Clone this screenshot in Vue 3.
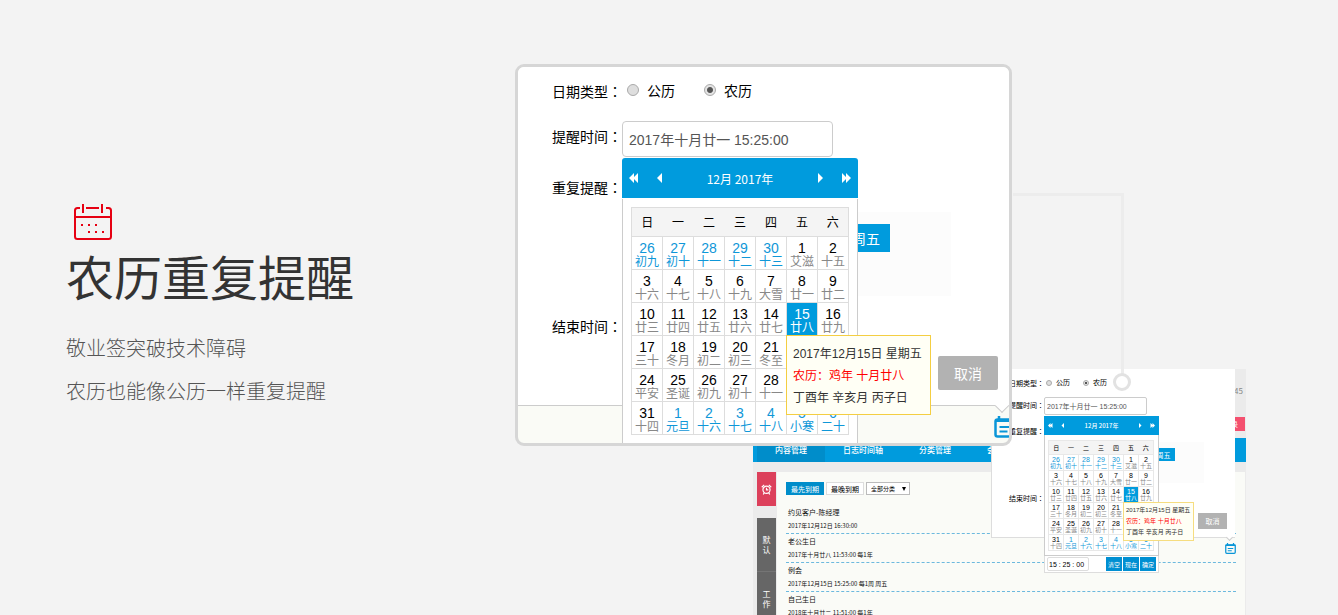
<script setup>
import { ref } from 'vue'

const weekdays = ['日', '一', '二', '三', '四', '五', '六']

const source = [
  '26 初九,27 初十,28 十一,29 十二,30 十三,1 艾滋,2 十五',
  '3 十六,4 十七,5 十八,6 十九,7 大雪,8 廿一,9 廿二',
  '10 廿三,11 廿四,12 廿五,13 廿六,14 廿七,15 廿八,16 廿九',
  '17 三十,18 冬月,19 初二,20 初三,21 冬至,22 初五,23 初六',
  '24 平安,25 圣诞,26 初九,27 初十,28 十一,29 十二,30 十三',
  '31 十四,1 元旦,2 十六,3 十七,4 十八,5 小寒,6 二十'
]

const weeks = source.map((row, w) =>
  row.split(',').map((cell) => {
    const [day, lunar] = cell.split(' ')
    const other = (w === 0 && +day > 20) || (w === 5 && +day < 20)
    return { day, lunar, other, active: w === 2 && day === '15' }
  })
)

const windows = ['large', 'small']
const kind = ref({ large: 'lunar', small: 'lunar' })
const when = ref('2017年十月廿一 15:25:00')
const time = ref('15 : 25 : 00')
const category = ref('全部分类')

const notes = [
  { title: '约见客户-陈经理', due: '2017年12月12日 16:30:00' },
  { title: '老公生日', due: '2017年十月廿八 11:53:00 每1年' },
  { title: '例会', due: '2017年12月15日 15:25:00 每1周 周五' },
  { title: '自己生日', due: '2018年十月廿二 11:51:00 每1年' }
]
</script>

<template>
  <main class="hero">
    <section class="copy">
      <svg class="mark" viewBox="0 0 38 38" fill="none" stroke="#e60012" stroke-width="2">
        <path d="M6 4H3.500Q1 4 1 6.500V32.500Q1 35 3.500 35H34.500Q37 35 37 32.500V6.500Q37 4 34.500 4H32M12 4H25M1 13H37" />
        <path d="M9 0V9M28 0V9" />
        <path d="M7 21h2M14 21h2M21 21h2M14 28h2M21 28h2M28 28h2" />
      </svg>
      <h1>农历重复提醒</h1>
      <p>敬业签突破技术障碍</p>
      <p>农历也能像公历一样重复提醒</p>
    </section>

    <section class="stage">
      <div class="site">
        <header class="site-head">
          <span>45</span>
          <button type="button">登录</button>
        </header>
        <nav class="site-nav">
          <a href="#" class="on">内容管理</a>
          <a href="#">日志时间轴</a>
          <a href="#">分类管理</a>
          <a href="#">会员</a>
        </nav>
        <div class="site-body">
          <aside>
            <button type="button" class="alarm" aria-label="提醒">
              <svg viewBox="0 0 12 12" fill="none" stroke="#fff" stroke-width="1.300">
                <circle cx="6" cy="6.300" r="3.900" />
                <path d="M6 4v2.500h2M.8 3.500 3.500 1M11.200 3.500 8.500 1M3.500 9.500 2.500 11.500M8.500 9.500 9.500 11.500" />
              </svg>
            </button>
            <div class="tabs">
              <button type="button">默认</button>
              <button type="button">工作</button>
            </div>
          </aside>
          <div class="list">
            <div class="tools">
              <button type="button" class="on">最先到期</button>
              <button type="button">最晚到期</button>
              <span class="pick">
                <select v-model="category" aria-label="分类">
                  <option>全部分类</option>
                </select>
                <svg viewBox="0 0 4 4"><path d="M0 0h4L2 4z" /></svg>
              </span>
            </div>
            <article v-for="note in notes" :key="note.title">
              <h2>{{ note.title }}</h2>
              <p>{{ note.due }}</p>
            </article>
          </div>
        </div>
      </div>

      <div v-for="size in windows" :key="size" class="window" :class="size">
        <form class="popup" @submit.prevent>
          <div class="row kinds">
            <span class="label">日期类型<i>：</i></span>
            <label><input v-model="kind[size]" type="radio" :name="size + '-kind'" value="solar" />公历</label>
            <label><input v-model="kind[size]" type="radio" :name="size + '-kind'" value="lunar" />农历</label>
          </div>
          <div class="row when">
            <label class="label" :for="size + '-when'">提醒时间<i>：</i></label>
            <div class="field">
              <input :id="size + '-when'" v-model="when" type="text" />
              <div class="calendar">
                <div class="cal-head">
                  <button type="button" aria-label="上一年"><svg viewBox="0 0 10 10"><path d="M5 0v10L0 5zM9 0v10L4 5z" /></svg></button>
                  <button type="button" aria-label="上一月"><svg viewBox="0 0 10 10"><path d="M8 0v10L3 5z" /></svg></button>
                  <strong>12月 2017年</strong>
                  <button type="button" aria-label="下一月"><svg viewBox="0 0 10 10"><path d="M2 0v10l5-5z" /></svg></button>
                  <button type="button" aria-label="下一年"><svg viewBox="0 0 10 10"><path d="M1 0v10l5-5zM5 0v10l5-5z" /></svg></button>
                </div>
                <div class="cal-body">
                  <table>
                    <thead>
                      <tr><th v-for="d in weekdays" :key="d" scope="col">{{ d }}</th></tr>
                    </thead>
                    <tbody>
                      <tr v-for="(week, w) in weeks" :key="w">
                        <td v-for="cell in week" :key="cell.day">
                          <div class="cell">
                            <button type="button" class="day" :class="{ other: cell.other, active: cell.active }">
                              <b>{{ cell.day }}</b><small>{{ cell.lunar }}</small>
                            </button>
                            <div v-if="cell.active" class="tip">
                              <p>2017年12月15日 星期五</p>
                              <p class="red">农历：鸡年 十月廿八</p>
                              <p>丁酉年 辛亥月 丙子日</p>
                            </div>
                          </div>
                        </td>
                      </tr>
                    </tbody>
                  </table>
                </div>
                <div v-if="size === 'small'" class="cal-foot">
                  <input v-model="time" type="text" aria-label="时间" />
                  <span><button type="button">清空</button><button type="button">现在</button><button type="button">确定</button></span>
                </div>
              </div>
            </div>
          </div>
          <div class="row repeat">
            <span class="label">重复提醒<i>：</i></span>
            <div class="choices"><button type="button">周五</button></div>
          </div>
          <div class="row end">
            <span class="label">结束时间<i>：</i></span>
          </div>
          <div class="actions"><button type="button">取消</button></div>
          <span class="notch"></span>
        </form>
        <svg class="agenda" viewBox="0 0 22 22" fill="none" stroke="#0a96d8">
          <rect x="1.500" y="3.500" width="19" height="17" rx="2" stroke-width="2.500" />
          <path d="M1 4.500h20" stroke-width="3" />
          <path d="M5 0v5M17 0v5" stroke-width="2.500" />
          <path d="M5.500 11h11M5.500 15.500h8" stroke-width="2" />
        </svg>
      </div>

      <div class="connector"></div>
      <div class="ring"></div>
    </section>
  </main>
</template>

<style>
body {
  margin: 0;
  background: #f3f3f3;
}
</style>

<style scoped>
* {
  box-sizing: border-box;
}

.hero {
  display: flex;
  min-height: 100vh;
  overflow: hidden;
  background: #f3f3f3;
  color: #000;
  font-family: "Liberation Sans", "Noto Sans CJK SC", sans-serif;
}

button,
input,
select {
  margin: 0;
  padding: 0;
  border: 0;
  font: inherit;
  color: inherit;
  background: none;
}

button {
  display: block;
  cursor: pointer;
}

h1,
h2,
p {
  margin: 0;
  font-weight: 400;
}

a {
  color: inherit;
  text-decoration: none;
}

svg {
  display: block;
}

/* headline column */
.copy {
  flex: none;
  width: 515px;
  padding: 204px 0 0 66px;
}

.mark {
  width: 38px;
  height: 38px;
  margin-left: 8px;
}

.copy h1 {
  margin: 5px 0 15px;
  font-size: 48px;
  line-height: 66px;
  font-weight: 400;
  color: #333;
}

.copy p {
  font-size: 20px;
  line-height: 43px;
  font-weight: 300;
  color: #555;
}

/* free canvas of overlapping windows */
.stage {
  position: relative;
  flex: 1;
  overflow: hidden;
}

.connector {
  position: absolute;
  left: 498px;
  top: 193px;
  z-index: 3;
  width: 111px;
  height: 181px;
  border: solid #ececec;
  border-width: 3px 3px 0 0;
}

.ring {
  position: absolute;
  left: 598px;
  top: 373px;
  z-index: 3;
  width: 18px;
  height: 18px;
  border: 3px solid #e2e2e2;
  border-radius: 50%;
  background: #fff;
}

/* note site */
.site {
  position: absolute;
  left: 238px;
  top: 369px;
  bottom: 0;
  width: 493px;
  overflow: hidden;
  background: #ebebeb;
  font-family: "Noto Sans CJK SC", sans-serif;
}

.site-head {
  display: flex;
  flex-direction: column;
  align-items: flex-end;
  height: 69px;
  padding-top: 16px;
}

.site-head span {
  margin: 0 3px 20px 0;
  font-size: 8px;
  line-height: 12px;
  color: #888;
}

.site-head button {
  height: 14px;
  margin-right: 1px;
  padding: 0 7px;
  background: #f4506f;
  color: #fff;
  font-size: 7px;
  line-height: 14px;
}

.site-nav {
  display: flex;
  height: 24px;
  padding-left: 4px;
  background: #009bdd;
  color: #fff;
  font-size: 8px;
  line-height: 24px;
  font-weight: 500;
}

.site-nav a {
  padding: 0 18px;
}

.site-nav .on {
  background: #008dca;
}

.site-body {
  display: flex;
  height: 100%;
  padding: 10px 1px 0 4px;
}

aside {
  width: 19px;
  margin-right: 1px;
  font-size: 8px;
  line-height: 10px;
  color: #fff;
}

.alarm {
  width: 19px;
  height: 34px;
  margin-bottom: 12px;
  padding: 0 4px;
  background: #dc405b;
}

.tabs {
  height: 200px;
  background: #666;
}

.tabs button {
  width: 19px;
  height: 54px;
  padding: 0 5px;
  border-bottom: 1px solid #757575;
}

.list {
  flex: 1;
  padding: 10px 9px;
  background: #fafbf7;
}

.tools {
  display: flex;
  gap: 2px;
  margin-bottom: 10px;
  font-size: 7px;
  line-height: 10px;
}

.tools button {
  width: 38px;
  height: 13px;
  border: 1px solid #ddd;
  background: #fff;
}

.tools .on {
  border-color: #008dca;
  background: #008dca;
  color: #fff;
}

.pick {
  position: relative;
  width: 44px;
  height: 13px;
  border: 1px solid #bbb;
  background: #fff;
}

.pick select {
  display: block;
  width: 100%;
  height: 100%;
  padding-left: 4px;
  appearance: none;
  font-size: 6px;
}

.pick svg {
  position: absolute;
  right: 3px;
  top: 4px;
  width: 4px;
  height: 4px;
}

.list article {
  height: 29px;
  padding-left: 2px;
  border-bottom: 1px dashed #6cb9de;
  color: #111;
}

.list h2 {
  font-size: 7px;
  line-height: 14px;
}

.list p {
  font-size: 6px;
  line-height: 14px;
}

/* reminder windows, shared */
.window {
  position: absolute;
}

.popup {
  position: relative;
  background: #fff;
}

.row {
  display: flex;
  align-items: flex-start;
}

.label {
  flex: none;
  font-family: "Noto Sans CJK SC", sans-serif;
}

.label i {
  font-family: "Noto Sans CJK TC", sans-serif;
  font-style: normal;
}

.kinds label {
  display: flex;
  align-items: center;
}

.kinds input {
  appearance: none;
  display: block;
  border: 1px solid #aaa;
  border-radius: 50%;
  background: #dedede;
}

.kinds input:checked {
  background: radial-gradient(circle, #555 35%, #e4e4e4 50%);
}

.field {
  position: relative;
}

.field > input {
  display: block;
  border: 1px solid #ccc;
  background: #fff;
  color: #555;
}

.calendar {
  position: absolute;
  left: 0;
  z-index: 2;
}

.cal-head {
  display: flex;
  align-items: center;
  background: #009bdd;
  color: #fff;
}

.cal-head strong {
  flex: 1;
  text-align: center;
  font-family: "Noto Sans CJK SC", sans-serif;
  font-weight: 400;
}

.cal-head svg {
  width: 100%;
  fill: #fff;
}

.cal-body {
  border: solid #ccc;
  border-width: 0 1px 1px;
  background: #fff;
}

table {
  width: 100%;
  table-layout: fixed;
  border-collapse: collapse;
}

th,
td {
  padding: 0;
  border: 1px solid #ddd;
}

th {
  border-width: 1px 0;
  background: #f4f4f4;
  font-weight: 400;
}

th:first-child {
  border-left-width: 1px;
}

th:last-child {
  border-right-width: 1px;
}

.cell {
  position: relative;
}

.day {
  display: flex;
  flex-direction: column;
  align-items: center;
  width: 100%;
}

.day b {
  font-weight: 400;
}

.day small {
  color: #888;
}

.day.other,
.day.other small {
  color: #0f97d8;
}

.day.active,
.day.active small {
  background: #009bdd;
  color: #fff;
}

.tip {
  position: absolute;
  left: -1px;
  top: 100%;
  z-index: 3;
  border: 1px solid #f4ce42;
  background: #fffff5;
  color: #333;
  white-space: nowrap;
}

.tip .red {
  color: #f00;
}

.choices {
  background: #fcfcfc;
}

.choices button {
  background: #009bdd;
  color: #fff;
}

.actions {
  display: flex;
  justify-content: flex-end;
}

.actions button {
  background: #b2b2b2;
  color: #fff;
}

.notch {
  position: absolute;
  border: solid #ccc;
  border-width: 0 1px 1px 0;
  background: #fff;
  transform: rotate(45deg);
}

.agenda {
  position: absolute;
}

/* large window */
.large {
  left: 0;
  top: 64px;
  z-index: 2;
  width: 497px;
  height: 382px;
  overflow: hidden;
  border: 3px solid #d6d6d6;
  border-radius: 9px;
  background: #fafbf6;
  font-size: 14px;
}

.large .popup {
  padding: 8px 11px 15px 34px;
  border-bottom: 1px solid #ccc;
}

.large .label {
  width: 70px;
}

.large .kinds {
  height: 32px;
  line-height: 32px;
}

.large .kinds label {
  margin: 0 27px 0 5px;
}

.large .kinds label + label {
  margin-left: 2px;
}

.large .kinds input {
  width: 12px;
  height: 12px;
  margin: 0 8px 2px 0;
}

.large .when {
  height: 60px;
}

.large .when .label {
  line-height: 58px;
}

.large .field {
  margin-top: 14px;
}

.large .field > input {
  width: 211px;
  height: 36px;
  padding: 0 6px;
  border-radius: 4px;
}

.large .calendar {
  top: 37px;
  width: 236px;
}

.large .cal-head {
  height: 40px;
  margin-bottom: 1px;
  padding: 0 7px;
  border-radius: 3px 3px 0 0;
  font-size: 12px;
}

.large .cal-head button {
  width: 10px;
}

.large .cal-head button + button,
.large .cal-head strong + button {
  margin-left: 15px;
}

.large .cal-head strong {
  margin-right: -15px;
}

.large .cal-body {
  padding: 8px;
}

.large th {
  height: 29px;
  padding-bottom: 2px;
  font-size: 12px;
}

.large .day {
  height: 32px;
  padding-top: 4px;
}

.large .day b {
  font-size: 14px;
  line-height: 14px;
}

.large .day small {
  font-size: 12px;
  line-height: 14px;
}

.large .tip {
  width: 145px;
  padding: 7px 6px 5px;
  font-size: 12px;
  line-height: 22px;
}

.large .repeat {
  height: 129px;
}

.large .repeat .label {
  line-height: 40px;
}

.large .choices {
  width: 329px;
  height: 84px;
  margin-top: 45px;
  padding: 12px 0 0 220px;
}

.large .choices button {
  width: 48px;
  height: 28px;
}

.large .end {
  height: 60px;
  line-height: 60px;
}

.large .actions button {
  width: 60px;
  height: 34px;
  border-radius: 2px;
}

.large .notch {
  right: 2px;
  bottom: -6px;
  width: 10px;
  height: 10px;
}

.large .agenda {
  right: -7px;
  bottom: 5px;
  width: 22px;
  height: 22px;
}

/* small window */
.small {
  left: 476px;
  top: 369px;
  z-index: 1;
  width: 244px;
  font-size: 7px;
}

.small .popup {
  padding: 6px 8px 8px 17px;
  border: solid #ddd;
  border-width: 0 0 1px 1px;
}

.small .label {
  width: 35px;
}

.small .kinds {
  height: 16px;
  line-height: 16px;
}

.small .kinds label {
  margin: 0 13px 0 2px;
}

.small .kinds label + label {
  margin-left: 0;
}

.small .kinds input {
  width: 6px;
  height: 6px;
  margin: 0 4px 1px 0;
}

.small .when {
  height: 30px;
}

.small .when .label {
  line-height: 28px;
}

.small .field {
  margin-top: 6px;
}

.small .field > input {
  width: 103px;
  height: 18px;
  padding: 0 2px;
  border-radius: 2px;
}

.small .calendar {
  top: 19px;
  width: 115px;
}

.small .cal-head {
  height: 19px;
  padding: 0 4px;
  font-size: 6px;
}

.small .cal-head strong {
  margin-right: -7px;
  font-weight: 500;
}

.small .cal-head button {
  width: 5px;
}

.small .cal-head button + button,
.small .cal-head strong + button {
  margin-left: 7px;
}

.small .cal-body {
  padding: 5px 4px 4px 3px;
}

.small th,
.small td {
  border-color: #e8e8e8;
}

.small th {
  height: 14px;
  font-size: 6px;
  line-height: 12px;
}

.small .day {
  height: 15px;
  padding-top: 1px;
}

.small .day b {
  font-size: 7px;
  line-height: 7px;
}

.small .day small {
  font-size: 6px;
  line-height: 7px;
}

.small .tip {
  width: 71px;
  padding: 2px;
  font-size: 6px;
  line-height: 11px;
  border-color: #f6dd80;
}

.cal-foot {
  display: flex;
  justify-content: space-between;
  padding: 1px 2px;
  border: solid #ddd;
  border-width: 0 1px 1px;
  background: #fff;
}

.cal-foot input {
  width: 42px;
  height: 14px;
  padding: 0 1px;
  border: 1px solid #ddd;
  border-radius: 2px;
}

.cal-foot span {
  display: flex;
  gap: 1px;
}

.cal-foot button {
  width: 16px;
  height: 14px;
  background: #008fd2;
  color: #fff;
  font-size: 6px;
}

.small .repeat {
  height: 62px;
}

.small .repeat .label {
  line-height: 20px;
}

.small .choices {
  width: 160px;
  height: 41px;
  margin-top: 21px;
  padding: 6px 0 0 108px;
}

.small .choices button {
  width: 23px;
  height: 13px;
}

.small .end {
  height: 30px;
  line-height: 30px;
}

.small .actions button {
  width: 29px;
  height: 16px;
}

.small .notch {
  right: 3px;
  bottom: -3px;
  width: 5px;
  height: 5px;
}

.small .agenda {
  right: -1px;
  bottom: -16px;
  width: 11px;
  height: 11px;
}
</style>
